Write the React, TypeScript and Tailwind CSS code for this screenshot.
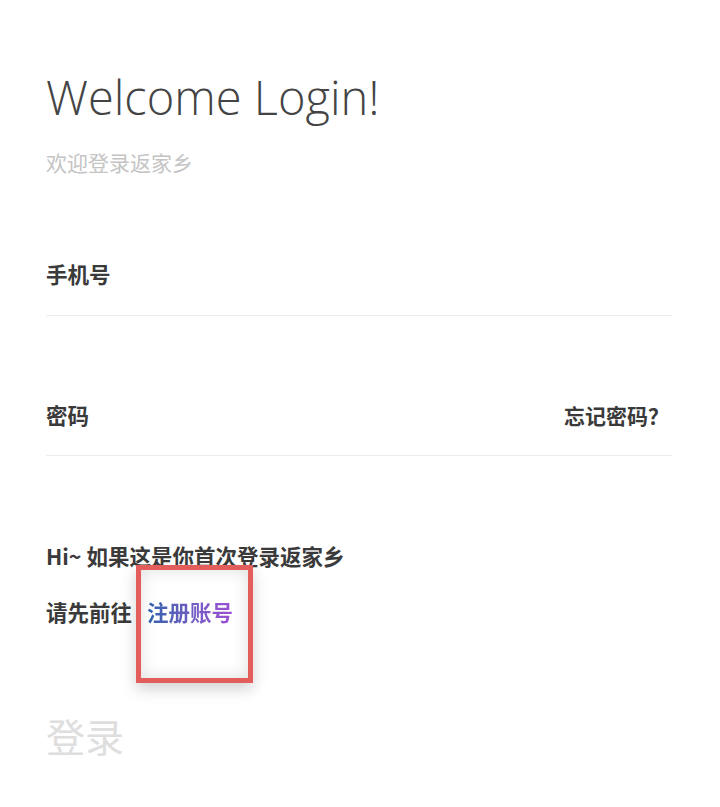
const App = () => {
  const cn = { fontFamily: '"Noto Sans CJK SC", "Noto Sans", sans-serif' };

  return (
    <div className="min-h-[807px] w-[720px] bg-white px-[46px] pt-[68px]" style={cn}>
      <h1
        className="text-[47px] leading-[58px] font-light text-[#444]"
        style={{ fontFamily: '"Open Sans", "Noto Sans", sans-serif' }}
      >
        Welcome Login!
      </h1>
      <p className="mt-[21px] text-[21px] leading-[30px] text-[#c4c4c4]">欢迎登录返家乡</p>

      <div className="mt-[82px] border-b border-[#ededed] pb-[26px] mr-[2px]">
        <label className="block text-[21.5px] leading-[30px] font-bold text-[#3a3a3a]">手机号</label>
      </div>

      <div className="mt-[84px] flex items-center justify-between border-b border-[#ededed] pb-[25px] mr-[2px]">
        <label className="text-[21.5px] leading-[30px] font-bold text-[#3a3a3a]">密码</label>
        <span className="text-[21px] leading-[30px] font-bold text-[#3a3a3a] pr-[3px]">忘记密码？</span>
      </div>

      <p className="mt-[85px] text-[21.5px] leading-[30px] font-bold text-[#3a3a3a]">Hi~ 如果这是你首次登录返家乡</p>

      <div className="mt-[26px] flex items-center text-[21.5px] leading-[30px] font-bold">
        <span className="text-[#3a3a3a]">请先前往</span>
        <span className="relative ml-[15px]">
          <span className="bg-gradient-to-r from-[#2a62ad] to-[#9c50d4] bg-clip-text text-transparent">注册账号</span>
          <span className="pointer-events-none absolute left-[-11px] top-[-32px] h-[118px] w-[117px] border-[5px] border-[#e35d5d] shadow-[0_6px_14px_rgba(0,0,0,0.18),inset_0_0_16px_rgba(0,0,0,0.13)]" />
        </span>
      </div>

      <button className="mt-[84px] block text-[39px] leading-[48px] text-[#dedede]">登录</button>
    </div>
  );
};

export default App;
